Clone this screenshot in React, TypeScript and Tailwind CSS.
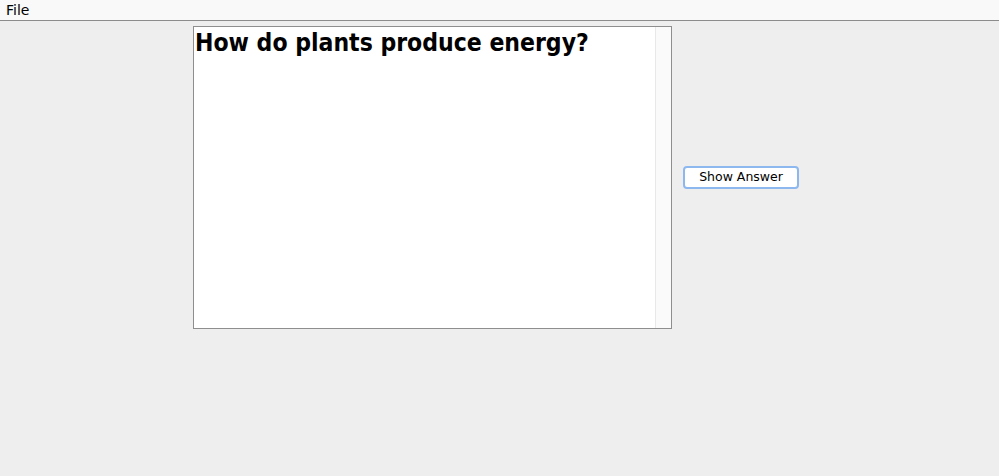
import React from 'react';

const App: React.FC = () => {
  return (
    <div className="w-[999px] h-[476px] bg-[#eeeeee] overflow-hidden" style={{ fontFamily: '"DejaVu Sans", sans-serif' }}>
      <div className="h-[21px] bg-[#f9f9f9] border-b border-[#8c8c8c] flex items-center">
        <span className="ml-[6px] text-[14px] leading-none text-black">File</span>
      </div>
      <div className="flex items-center justify-center gap-[11px] mt-[5px] pr-[7px]">
        <div className="w-[479px] h-[303px] bg-white border border-[#8e8e8e] flex">
          <div className="flex-1 pl-[1px] pt-0">
            <h1 className="font-['DejaVu_Sans_Condensed',sans-serif] text-[24.5px] font-bold leading-[32px] text-black">How do plants produce energy?</h1>
          </div>
          <div className="w-[16px] h-full bg-[#fafafa] border-l border-[#e8e8e8]" />
        </div>
        <button className="w-[116px] h-[23px] bg-white border-2 border-[#8db8ef] rounded-[4px] text-[12.5px] leading-none text-black flex items-center justify-center">
          Show Answer
        </button>
      </div>
    </div>
  );
};

export default App;
